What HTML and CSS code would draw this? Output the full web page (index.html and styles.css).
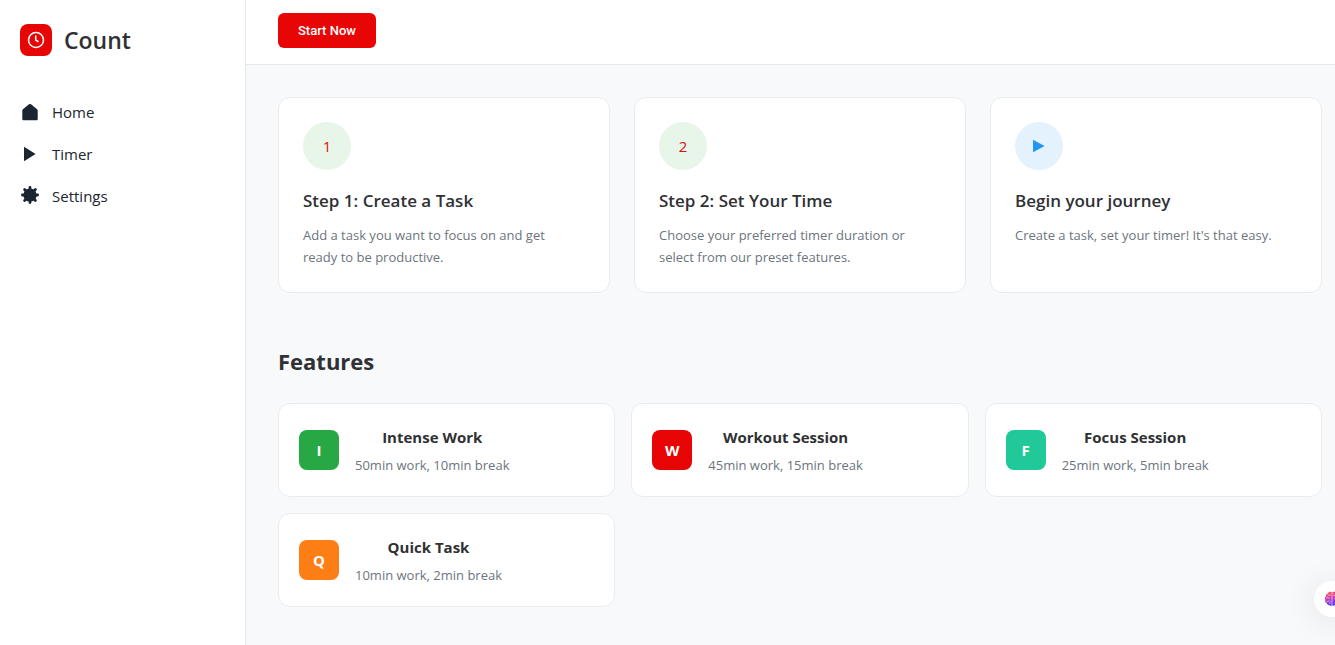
FILE: index.html
```html
<!DOCTYPE html>
<html lang="en">
<head>
<meta charset="utf-8">
<meta name="viewport" content="width=device-width, initial-scale=1">
<title>Count</title>
<link rel="stylesheet" href="styles.css">
</head>
<body>
<div class="app">
  <aside class="sidebar">
    <div class="brand">
      <span class="brand-mark">
        <svg width="18" height="18" viewBox="0 0 18 18" fill="none" stroke="currentColor" stroke-width="1.5" stroke-linecap="round" stroke-linejoin="round" aria-hidden="true"><circle cx="9" cy="9" r="7.500"/><path d="M8.700 5v4.200l2.400 1.300"/></svg>
      </span>
      <span class="brand-name">Count</span>
    </div>
    <nav class="nav">
      <a class="nav-link" href="#home">
        <svg class="nav-icon" viewBox="0 0 20 20" fill="currentColor" aria-hidden="true"><path d="M9 2.300a1.600 1.600 0 0 1 2 0l5.800 4.600a2.300 2.300 0 0 1 .9 1.800V17a1.200 1.200 0 0 1-1.200 1.200h-13A1.200 1.200 0 0 1 2.300 17V8.700a2.300 2.300 0 0 1 .9-1.800z"/></svg>
        <span>Home</span>
      </a>
      <a class="nav-link" href="#timer">
        <svg class="nav-icon" viewBox="0 0 20 20" fill="currentColor" aria-hidden="true"><path d="M4 2.800 15.600 10 4 17.200z"/></svg>
        <span>Timer</span>
      </a>
      <a class="nav-link" href="#settings">
        <svg class="nav-icon" viewBox="0 0 20 20" fill="currentColor" aria-hidden="true"><circle cx="10" cy="9" r="6.600"/><g stroke="currentColor" stroke-width="2.800" stroke-linecap="round"><path d="M10 1.400v15.200M2.400 9h15.200M4.600 3.600l10.800 10.800M15.400 3.600 4.600 14.400"/></g></svg>
        <span>Settings</span>
      </a>
    </nav>
  </aside>

  <div class="page">
    <header class="topbar">
      <button class="start-button" type="button">Start Now</button>
    </header>

    <main class="content">
      <section class="steps" aria-label="Getting started">
        <article class="step">
          <div class="step-badge">1</div>
          <h2 class="step-title">Step 1: Create a Task</h2>
          <p class="step-text">Add a task you want to focus on and get ready to be productive.</p>
        </article>
        <article class="step">
          <div class="step-badge">2</div>
          <h2 class="step-title">Step 2: Set Your Time</h2>
          <p class="step-text">Choose your preferred timer duration or select from our preset features.</p>
        </article>
        <article class="step">
          <div class="step-badge step-badge-play">
            <svg width="12" height="14" viewBox="0 0 12 14" fill="currentColor" aria-hidden="true"><path d="M0 .7 11.600 7 0 13.300z"/></svg>
          </div>
          <h2 class="step-title">Begin your journey</h2>
          <p class="step-text">Create a task, set your timer! It's that easy.</p>
        </article>
      </section>

      <section class="features">
        <h2 class="features-title">Features</h2>
        <div class="feature-grid">
          <button class="feature" type="button">
            <span class="feature-mark mark-green">I</span>
            <span class="feature-body"><span class="feature-name">Intense Work</span><span class="feature-text">50min work, 10min break</span></span>
          </button>
          <button class="feature" type="button">
            <span class="feature-mark mark-red">W</span>
            <span class="feature-body"><span class="feature-name">Workout Session</span><span class="feature-text">45min work, 15min break</span></span>
          </button>
          <button class="feature" type="button">
            <span class="feature-mark mark-teal">F</span>
            <span class="feature-body"><span class="feature-name">Focus Session</span><span class="feature-text">25min work, 5min break</span></span>
          </button>
          <button class="feature" type="button">
            <span class="feature-mark mark-orange">Q</span>
            <span class="feature-body"><span class="feature-name">Quick Task</span><span class="feature-text">10min work, 2min break</span></span>
          </button>
        </div>
      </section>
    </main>
  </div>
</div>

<button class="assistant" type="button" aria-label="Assistant">
  <svg width="16" height="18" viewBox="0 0 20 20" aria-hidden="true">
    <defs><linearGradient id="brain" x1="0" y1="0" x2="0.300" y2="1"><stop offset="0" stop-color="#ff6a3d"/><stop offset=".45" stop-color="#d63fb0"/><stop offset="1" stop-color="#5a3df0"/></linearGradient></defs>
    <path fill="url(#brain)" d="M9.500 1.500C7.500.5 5.300 1.300 4.800 3 3 3.300 2 5 2.500 6.700 1 7.700.7 9.800 1.600 11c-.6 1.800.2 3.500 1.800 4 .4 1.900 2 3 3.500 2.700 1 1.200 2.600 1 3.100.2.500.8 2.100 1 3.100-.2 1.500.3 3.100-.8 3.500-2.700 1.600-.5 2.400-2.200 1.800-4 .9-1.200.6-3.300-.9-4.300.5-1.700-.5-3.400-2.300-3.700-.5-1.700-2.700-2.500-4.700-1.500z"/>
    <path fill="none" stroke="#fff" stroke-width=".7" stroke-linecap="round" d="M10 2v16M4.800 4.500c.8 1.200 2 1.300 3 .8M3 8.500c1.500-.8 3-.3 3.500 1M3.500 13c1.200.5 2.500.2 3-1M7 15.500c-.3-1 .2-1.800 1.200-2M15.200 4.500c-.8 1.200-2 1.300-3 .8M17 8.500c-1.500-.8-3-.3-3.500 1"/>
  </svg>
</button>
</body>
</html>
```
FILE: styles.css
```css
*,
*::before,
*::after {
  box-sizing: border-box;
}

body {
  margin: 0;
  background: #f8f9fb;
  color: #2f3133;
  font-family: "Segoe UI", "Open Sans", "Noto Sans", sans-serif;
  font-size: 15px;
}

h2,
p {
  margin: 0;
}

button {
  font-family: inherit;
  cursor: pointer;
}

.app {
  display: flex;
  min-height: 100vh;
}

.sidebar {
  flex: 0 0 246px;
  padding: 24px 20px;
  background: #fff;
  border-right: 1px solid #e5e8ec;
}

.brand {
  display: flex;
  align-items: center;
  gap: 12px;
  margin-bottom: 35px;
}

.brand-mark {
  display: grid;
  place-items: center;
  width: 32px;
  height: 32px;
  border-radius: 8px;
  background: #e80505;
  color: #fff;
}

.brand-name {
  font-size: 23px;
  line-height: 32px;
  font-weight: 600;
}

.nav {
  display: flex;
  flex-direction: column;
}

.nav-link {
  display: flex;
  align-items: center;
  gap: 12px;
  height: 42px;
  color: #1a2530;
  text-decoration: none;
}

.nav-icon {
  width: 20px;
  height: 20px;
}

.page {
  flex: 1;
  min-width: 0;
}

.topbar {
  padding: 13px 32px 16px;
  background: #fff;
  border-bottom: 1px solid #e5e8ec;
}

.start-button {
  display: block;
  padding: 0 20px;
  border: 0;
  border-radius: 6px;
  background: #e80505;
  color: #fff;
  font-family: Roboto, "Liberation Sans", sans-serif;
  font-size: 13px;
  font-weight: 500;
  line-height: 35px;
}

.content {
  padding: 32px 13px 38px 32px;
}

.steps {
  display: grid;
  grid-template-columns: repeat(3, 1fr);
  gap: 24px;
  margin-bottom: 52px;
}

.step {
  padding: 24px;
  background: #fff;
  border: 1px solid #e9ecef;
  border-radius: 12px;
}

.step-badge {
  display: grid;
  place-items: center;
  width: 48px;
  height: 48px;
  margin-bottom: 16px;
  border-radius: 50%;
  background: #e8f5e9;
  color: #e01010;
}

.step-badge-play {
  background: #e3f2fd;
  color: #2196f3;
}

.step-title {
  margin-bottom: 8px;
  font-size: 17px;
  font-weight: 600;
  line-height: 30px;
}

.step-text {
  padding-right: 8px;
  color: #6c757d;
  font-size: 13px;
  line-height: 22px;
}

.features-title {
  margin-bottom: 26px;
  font-size: 22px;
  font-weight: 700;
  line-height: 32px;
}

.feature-grid {
  display: grid;
  grid-template-columns: repeat(3, 1fr);
  gap: 16px;
}

.feature {
  display: flex;
  align-items: center;
  gap: 16px;
  padding: 20px;
  background: #fff;
  border: 1px solid #e9ecef;
  border-radius: 12px;
  color: inherit;
}

.feature-mark {
  display: grid;
  place-items: center;
  width: 40px;
  height: 40px;
  border-radius: 8px;
  color: #fff;
  font-size: 15px;
  font-weight: 700;
}

.mark-green {
  background: #28a745;
}

.mark-red {
  background: #e80505;
}

.mark-teal {
  background: #20c997;
}

.mark-orange {
  background: #fd7e14;
}

.feature-body {
  display: flex;
  flex-direction: column;
  gap: 4px;
  text-align: center;
}

.feature-name {
  font-size: 15px;
  font-weight: 700;
  line-height: 26px;
}

.feature-text {
  color: #6c757d;
  font-size: 13px;
  line-height: 22px;
}

.assistant {
  position: fixed;
  right: -15px;
  bottom: 28px;
  display: grid;
  place-items: center;
  width: 36px;
  height: 36px;
  padding: 0;
  border: 0;
  border-radius: 50%;
  background: #fff;
  box-shadow: 0 4px 32px rgba(0, 0, 0, 0.1);
}
```
